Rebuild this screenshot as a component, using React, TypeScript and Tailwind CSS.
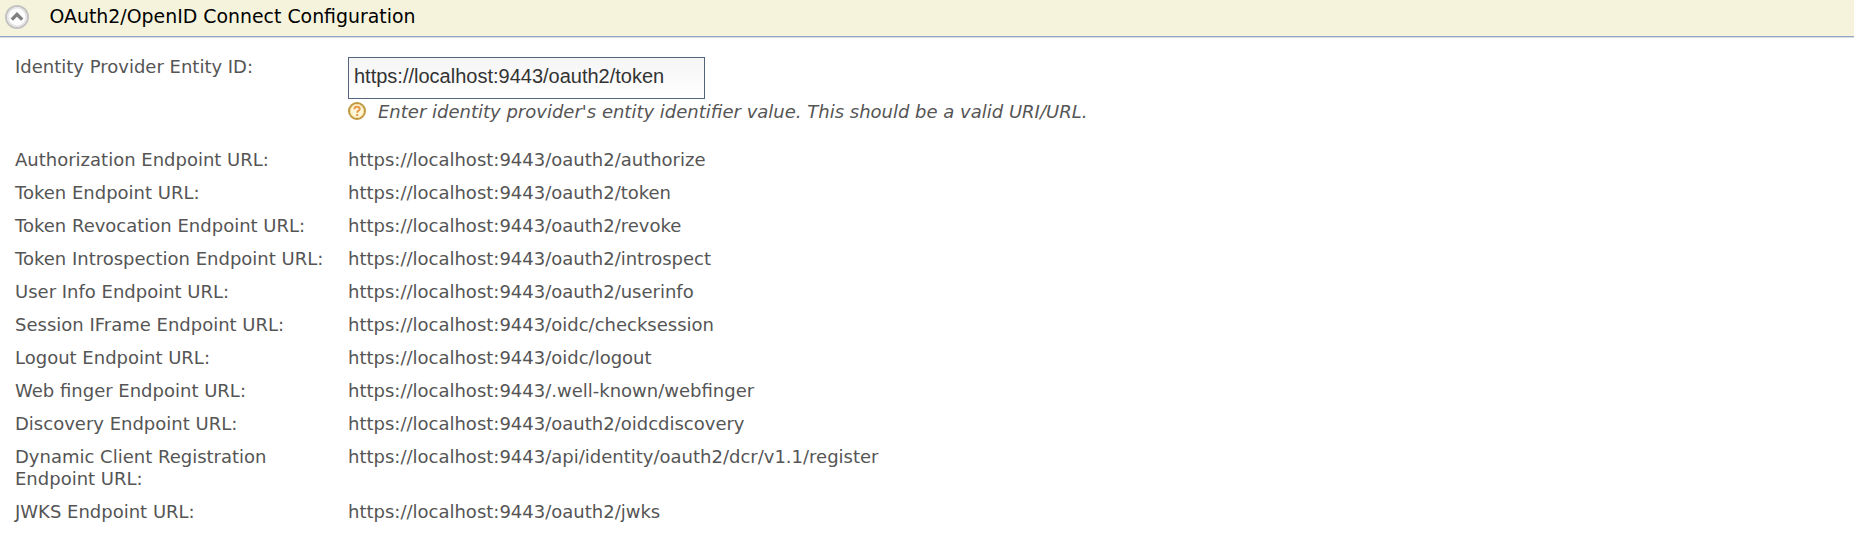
const rows = [
  ['Authorization Endpoint URL:', 'https://localhost:9443/oauth2/authorize'],
  ['Token Endpoint URL:', 'https://localhost:9443/oauth2/token'],
  ['Token Revocation Endpoint URL:', 'https://localhost:9443/oauth2/revoke'],
  ['Token Introspection Endpoint URL:', 'https://localhost:9443/oauth2/introspect'],
  ['User Info Endpoint URL:', 'https://localhost:9443/oauth2/userinfo'],
  ['Session IFrame Endpoint URL:', 'https://localhost:9443/oidc/checksession'],
  ['Logout Endpoint URL:', 'https://localhost:9443/oidc/logout'],
  ['Web finger Endpoint URL:', 'https://localhost:9443/.well-known/webfinger'],
  ['Discovery Endpoint URL:', 'https://localhost:9443/oauth2/oidcdiscovery'],
  ['Dynamic Client Registration Endpoint URL:', 'https://localhost:9443/api/identity/oauth2/dcr/v1.1/register'],
  ['JWKS Endpoint URL:', 'https://localhost:9443/oauth2/jwks'],
];

function CollapseIcon() {
  return (
    <svg className="ml-[5px] size-6 shrink-0" viewBox="0 0 24 24">
      <circle cx="12" cy="12" r="11" fill="#fff" stroke="#c3c3c3" strokeWidth="2" />
      <circle cx="12" cy="12" r="9.2" fill="#fdfdfd" stroke="#e4e4e4" strokeWidth="1.4" />
      <path d="M6.8 14.6 12 9.4l5.2 5.2" fill="none" stroke="#808080" strokeWidth="3.4" />
    </svg>
  );
}

function HelpIcon() {
  return (
    <svg className="mr-3 size-[18px] shrink-0" viewBox="0 0 18 18">
      <circle cx="9" cy="9" r="8" fill="#fff6d8" stroke="#bf983f" strokeWidth="2" />
      <circle cx="9" cy="9" r="6.6" fill="none" stroke="#f1dc9c" strokeWidth="1" />
      <path d="M6.4 7.2C6.4 5.6 7.4 4.8 9 4.8s2.7.8 2.7 2.1c0 1.7-2.5 1.8-2.5 3.8M9.2 12v2" fill="none" stroke="#e79a4b" strokeWidth="2" />
    </svg>
  );
}

export default function App() {
  return (
    <div className="h-[540px] w-full overflow-hidden bg-white font-['DejaVu_Sans',sans-serif] text-[18px] leading-[22px] text-[#555]">
      <header className="flex h-[37px] items-center border-b border-[#8fa6c8] bg-[#f5f3dc] pb-[2px] text-black shadow-[0_1px_0_#dedede]">
        <CollapseIcon />
        <h2 className="ml-[20.5px] pb-[2px] text-[18.9px]">OAuth2/OpenID Connect Configuration</h2>
      </header>
      <main className="pl-[15px] pt-[19px]">
        <div className="flex h-[93px]">
          <label htmlFor="entity-id" className="w-[333px]">Identity Provider Entity ID:</label>
          <div className="pt-px">
            <input id="entity-id" className="block h-[42px] w-[357px] border border-[#53657d] bg-linear-to-b from-[#f5f5f5] to-white px-[5px] pb-[3px] font-['Liberation_Sans',sans-serif] text-[20px] text-[#333]" defaultValue="https://localhost:9443/oauth2/token" />
            <div className="mt-[2px] flex items-start italic">
              <div className="pt-px"><HelpIcon /></div>
              <p>Enter identity provider's entity identifier value. This should be a valid URI/URL.</p>
            </div>
          </div>
        </div>
        <div className="grid grid-cols-[333px_1fr] gap-y-[11px]">
          {rows.map(([label, url]) => (
            <div key={label} className="contents">
              <div className="w-[315px]">{label}</div>
              <div>{url}</div>
            </div>
          ))}
        </div>
      </main>
    </div>
  );
}
